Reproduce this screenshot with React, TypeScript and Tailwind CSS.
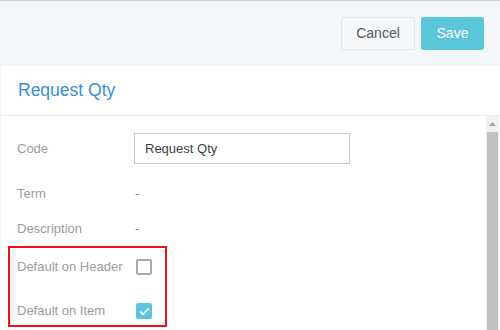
import React, { useState } from "react";

const font = { fontFamily: '"Liberation Sans", Arial, sans-serif' };

function Check({ checked, onClick }: { checked: boolean; onClick: () => void }) {
  if (checked) {
    return (
      <button
        type="button"
        onClick={onClick}
        className="w-[16px] h-[16px] rounded-[2px] bg-[#5bc5da] flex items-center justify-center"
      >
        <svg width="11" height="9" viewBox="0 0 11 9" fill="none">
          <path d="M1.2 4.6 L4 7.3 L9.8 1.4" stroke="#fff" strokeWidth="1.7" />
        </svg>
      </button>
    );
  }
  return (
    <button
      type="button"
      onClick={onClick}
      className="w-[16px] h-[16px] rounded-[2px] border-2 border-[#a9abae] bg-white"
    />
  );
}

export default function App() {
  const [code, set_code] = useState("Request Qty");
  const [onHeader, set_onHeader] = useState(false);
  const [onItem, set_onItem] = useState(true);

  return (
    <div
      style={font}
      className="w-[500px] h-[330px] overflow-hidden bg-[#f3f6f9] border-t border-[#cdd1d5] flex flex-col"
    >
      {/* action bar */}
      <div className="h-[65px] shrink-0 flex justify-end items-start pt-[16px] pr-[16px] gap-[6px]">
        <button
          type="button"
          className="w-[74px] h-[33px] rounded-[3px] border border-[#e2e5e8] bg-[#f5f7f9] text-[14px] text-[#555b61]"
        >
          Cancel
        </button>
        <button
          type="button"
          className="w-[63px] h-[33px] rounded-[3px] bg-[#5bc5da] text-[14px] text-white"
        >
          Save
        </button>
      </div>

      {/* title */}
      <div className="h-[50px] shrink-0 bg-white border-b border-[#eceef1] flex items-center pl-[17px] ml-[1px]">
        <h2 className="text-[17.5px] text-[#3a8fd6]">Request Qty</h2>
      </div>

      {/* body */}
      <div className="flex-1 flex bg-white ml-[1px]">
        <div className="flex-1 pl-[16px] pt-[17px] text-[13px]">
          <div className="h-[31px] flex items-center">
            <div className="w-[117px] text-[#9c9c9c]">Code</div>
            <input
              value={code}
              onChange={(e) => set_code(e.target.value)}
              className="w-[216px] h-[31px] border border-[#c9cccf] px-[10px] text-[13px] text-[#3d4246] outline-none"
            />
          </div>
          <div className="h-[35px] mt-[12px] flex items-center">
            <div className="w-[118px] text-[#9c9c9c]">Term</div>
            <div className="text-[#8a8a8a]">-</div>
          </div>
          <div className="h-[35px] flex items-center">
            <div className="w-[118px] text-[#9c9c9c]">Description</div>
            <div className="text-[#8a8a8a]">-</div>
          </div>
          <div className="ml-[-9px] w-[159px] h-[81px] border-2 border-[#f01018] pl-[7px]">
            <div className="h-[38px] flex items-center">
              <div className="w-[119px] text-[#9c9c9c]">Default on Header</div>
              <Check checked={onHeader} onClick={() => set_onHeader(!onHeader)} />
            </div>
            <div className="h-[30px] mt-[10px] flex items-center">
              <div className="w-[119px] text-[#9c9c9c]">Default on Item</div>
              <Check checked={onItem} onClick={() => set_onItem(!onItem)} />
            </div>
          </div>
        </div>

        {/* scrollbar */}
        <div className="w-[13px] mr-[1px] bg-[#f1f1f1] flex flex-col">
          <div className="h-[16px] flex items-center justify-center">
            <svg width="7" height="4" viewBox="0 0 7 4">
              <path d="M0 4 L3.5 0 L7 4 Z" fill="#a3a3a3" />
            </svg>
          </div>
          <div className="flex-1 mx-[1px] bg-[#c1c1c1]" />
        </div>
      </div>
    </div>
  );
}
